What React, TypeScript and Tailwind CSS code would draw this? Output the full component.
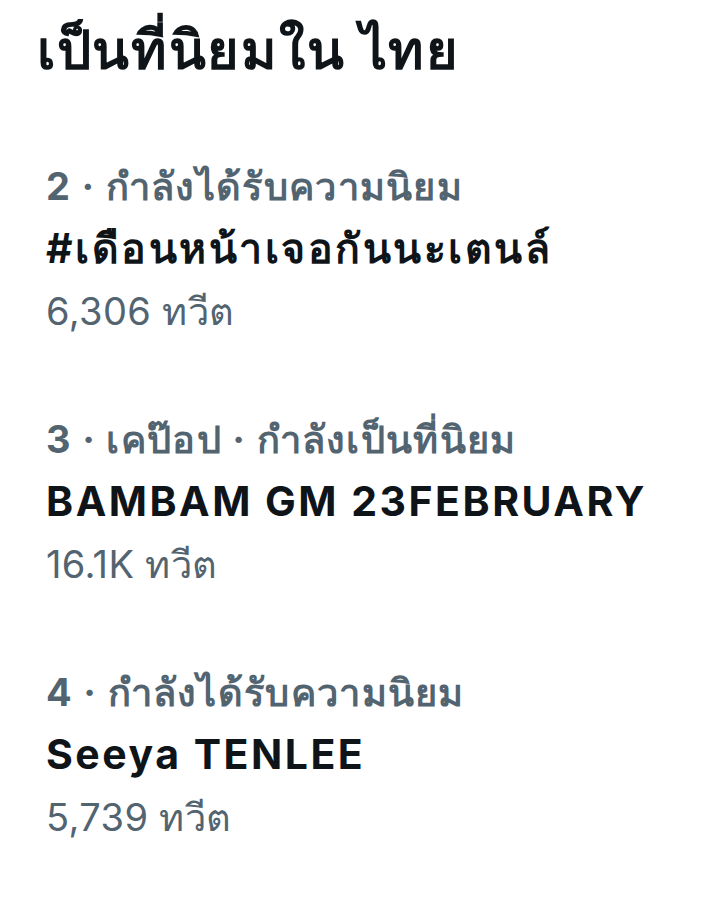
const trends = [
  { meta: "2 · กำลังได้รับความนิยม", title: "#เดือนหน้าเจอกันนะเตนล์", count: "6,306 ทวีต" },
  { meta: "3 · เคป๊อป · กำลังเป็นที่นิยม", title: "BAMBAM GM 23FEBRUARY", count: "16.1K ทวีต" },
  { meta: "4 · กำลังได้รับความนิยม", title: "Seeya TENLEE", count: "5,739 ทวีต" },
];

export default function App() {
  return (
    <div className="min-h-screen w-full bg-white font-['Inter','Noto_Sans',sans-serif]">
      <h1 className="px-[37px] pt-[18px] text-[54px] font-bold leading-[64px] tracking-[1.7px] text-[#0f1419]">
        เป็นที่นิยมใน ไทย
      </h1>
      <div className="mt-[73px] flex flex-col gap-[66px] px-[46px]">
        {trends.map((t) => (
          <div key={t.title} className="flex flex-col">
            <div className="text-[38px] font-bold leading-[62px] tracking-[1.3px] text-[#536471]">{t.meta}</div>
            <div className="text-[41px] font-bold leading-[62px] tracking-[2.5px] text-[#0f1419]">{t.title}</div>
            <div className="mt-[1px] text-[38px] leading-[62px] tracking-[0.4px] text-[#536471]">{t.count}</div>
          </div>
        ))}
      </div>
    </div>
  );
}
